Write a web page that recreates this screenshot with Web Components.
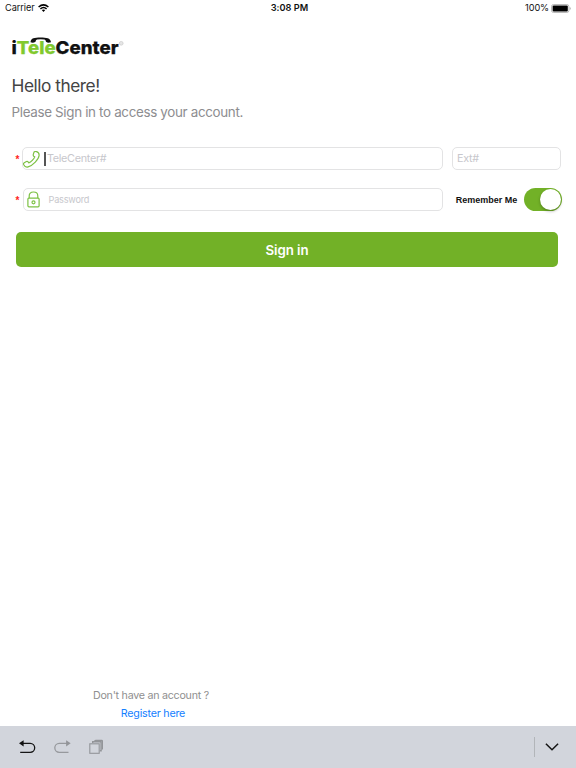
<!DOCTYPE html>
<html lang="en">
<head>
<meta charset="utf-8">
<title>iTeleCenter</title>
<style>
html,body{margin:0;height:100%;background:#fff}
body{font-family:Inter,"Liberation Sans",sans-serif;overflow:hidden}
</style>
</head>
<body>
<sign-in-screen></sign-in-screen>
<script>
const define = (name, html) => customElements.define(name, class extends HTMLElement {
  constructor() {
    super();
    const t = document.createElement('template');
    t.innerHTML = html;
    this.attachShadow({mode: 'open'}).append(t.content.cloneNode(true));
  }
});

define('status-bar', `
<style>
:host{display:grid;grid-template-columns:1fr auto 1fr;height:16px;align-items:center;padding:0 5px;box-sizing:border-box;font-size:9.2px;line-height:16px;color:#111}
.left,.right{display:flex;align-items:center}
.left{gap:3px;letter-spacing:-.08px}
.right{justify-content:flex-end;gap:2px;letter-spacing:-.1px}
.time{font-weight:600;padding-left:3px;letter-spacing:.02px}
svg{display:block}
</style>
<div class="left"><span>Carrier</span>
<svg width="11" height="8" viewBox="0 0 11 8"><g fill="none" stroke="#000" stroke-width="1.5"><path d="M.6 3Q5.5-1.3 10.4 3"/><path d="M2.4 4.9Q5.5 2.2 8.6 4.9"/></g><path d="M3.8 6.1Q5.5 4.8 7.2 6.1L5.5 7.9z"/></svg></div>
<span class="time">3:08 PM</span>
<div class="right"><span>100%</span>
<svg width="20" height="9" viewBox="0 0 20 9"><rect x=".5" y=".5" width="17.4" height="8" rx="2" fill="#fff" stroke="#aaa" stroke-width=".8"/><rect x="1.6" y="1.6" width="15.2" height="5.8" rx="1"/><path d="M18.7 3v3q1-.4 1-1.5t-1-1.5" fill="#aaa"/></svg></div>`);

define('brand-logo', `
<style>
:host{display:block;height:24px}
svg{display:block;font:800 18px Inter,"Liberation Sans",sans-serif}
</style>
<svg width="114" height="24" viewBox="0 0 114 24">
<text x="-.5" y="20.1" textLength="107" lengthAdjust="spacingAndGlyphs" fill="#111" stroke="#111" stroke-width=".25">i<tspan fill="#81c92e" stroke="#81c92e">Tele</tspan>Center</text>
<path d="M18.5 8.2C18.8 4 22.5 3.5 28.5 3.5S38.4 4 39 8.2Q36 9.3 34 7.8Q33.8 5.9 32.5 5.5Q28.5 4.9 25 5.5Q23.7 5.9 23.5 7.8Q21 9.3 18.5 8.2Z" fill="#111"/>
<circle cx="109.2" cy="9.3" r="1.9" fill="#e6e6e6" stroke="#ccc" stroke-width=".7"/>
</svg>`);

define('text-field', `
<style>
:host{display:flex;align-items:center;box-sizing:border-box;height:23px;border:1px solid #e3e3e4;border-radius:5px;background:#fff;color:#c7c7cc;font-size:10.8px;letter-spacing:-.3px;min-width:0}
</style><slot></slot>`);

define('required-mark', `
<style>:host{display:block;width:7.5px;text-align:left;color:#f22;font:700 10px/13px "Liberation Sans",sans-serif;padding:3px 0 0 .5px;box-sizing:border-box;height:18px}</style>*`);

define('phone-icon', `
<style>:host{display:block}svg{display:block}</style>
<svg width="17" height="17" viewBox="0 0 17 17"><path d="M11.1.9Q12.2.2 13.5.6Q16.3 1.4 16.1 4.5C15.8 8.3 9.9 14.6 5.1 15.9Q2.1 16.7.6 13.5Q.2 12.4 1.3 11.7L3.4 10.5Q4.4 10 5.1 10.9L5.8 11.9C7.8 11.2 11.1 7.7 11.8 5.9L10.8 5.2Q10 4.5 10.3 3.4Z" fill="none" stroke="#7dc144" stroke-width="1.2"/></svg>`);

define('lock-icon', `
<style>:host{display:block}svg{display:block}</style>
<svg width="13" height="17" viewBox="0 0 13 17"><g fill="none" stroke="#7dc144" stroke-width="1.2"><rect x=".9" y="7.1" width="11.2" height="8.7" rx="1"/><path d="M2.2 7V4.9Q2.2 1 6.5 1T10.8 4.9V7"/><circle cx="6.5" cy="11.3" r="1.5"/></g></svg>`);

define('toggle-switch', `
<style>
:host{display:flex;justify-content:flex-end;box-sizing:border-box;width:38px;height:23px;border-radius:12px;background:#72b127;padding:1px 1px}
i{width:21px;height:21px;border-radius:50%;background:#fff;box-shadow:0 1.5px 3px #0004}
</style><i></i>`);

define('primary-button', `
<style>:host{display:flex;align-items:center;justify-content:center;height:35px;border-radius:5px;background:#72b127;color:#fff;font-size:13.3px;font-weight:600;letter-spacing:-.05px}</style><slot></slot>`);

define('sign-up-prompt', `
<style>
:host{display:flex;flex-direction:column;align-items:center;font-size:10.7px;line-height:18px;color:#8f8f8f;letter-spacing:-.26px}
a{color:#1480ff;letter-spacing:-.2px;padding-left:4px}
</style><span>Don't have an account ?</span><a>Register here</a>`);

define('keyboard-toolbar', `
<style>
:host{display:flex;align-items:center;justify-content:space-between;height:42px;background:#d2d5dc;padding:0 17px 0 19px;box-sizing:border-box}
div{display:flex;align-items:center}
svg{display:block}
.a{gap:18px}.b{gap:10px}
b{width:1px;height:20px;background:#b2b5b9}
</style>
<div class="a">
<svg width="17" height="16" viewBox="0 0 17 16"><path d="M2 4.3H11.2A4.5 4.5 0 0 1 11.2 13.3H1.2" fill="none" stroke="#151515" stroke-width="1.3"/><path d="M0 4.3L4.6 1.2V7.4z" fill="#111"/></svg>
<svg width="17" height="16" viewBox="0 0 17 16"><path d="M14 4.3H5.3A4.5 4.5 0 0 0 5.3 13.3H14.5" fill="none" stroke="#97999d" stroke-width="1.3"/><path d="M16.7 4.3L12.1 1.2V7.4z" fill="#939599"/></svg>
<svg width="15" height="16" viewBox="0 0 15 16"><rect x=".8" y="4.8" width="9.4" height="9.5" fill="none" stroke="#939599" stroke-width="1.1"/><path d="M3.7 4V2.8H12.1V11.8H10.8" fill="none" stroke="#939599" stroke-width="1.4"/><path d="M5 2Q5.6.8 7 .8H12.8Q14 .8 14 2V10.5H12.8V2z" fill="#939599"/></svg>
</div>
<div class="b"><b></b><svg width="14" height="10" viewBox="0 0 14 10"><path d="M.9 1.7L7 7.7L13.1 1.7" fill="none" stroke="#151515" stroke-width="1.5"/></svg></div>`);

define('sign-in-screen', `
<style>
:host{display:flex;flex-direction:column;height:768px;width:576px;background:#fff}
main{flex:1;display:flex;flex-direction:column}
brand-logo{margin:18px 0 0 12px}
h1,p{margin:0 0 0 11.5px;font-weight:400}
h1{margin-top:16px;font-size:17.3px;line-height:24px;color:#444;letter-spacing:-.46px}
p{margin-top:4px;font-size:13.4px;line-height:20px;color:#8d8d90;letter-spacing:-.33px}
.row{display:flex;align-items:center}
.one{margin:25px 15px 0 15px}
.two{margin:18px 14px 0 15px}
.main{width:420.5px;flex:none}
.one phone-icon{margin:1px 0 0 -.5px}
.ext{width:109.5px;margin-left:9px;padding-left:4px}
.caret{width:2px;height:14px;background:#555;margin:0 .5px 0 4.5px}
lock-icon{margin:0 9px 0 3px}
.pw{font-size:9.2px;letter-spacing:-.22px;margin-top:-1px}
.remember{font:700 9px "Liberation Sans",sans-serif;color:#111;margin-left:12.8px;white-space:nowrap}
toggle-switch{margin-left:auto}
primary-button{margin:21px 18px 0 16px}
sign-up-prompt{margin:auto auto 3px 93px}
</style>
<status-bar></status-bar>
<main>
<brand-logo></brand-logo>
<h1>Hello there!</h1>
<p>Please Sign in to access your account.</p>
<div class="row one"><required-mark></required-mark><text-field class="main"><phone-icon></phone-icon><i class="caret"></i><span>TeleCenter#</span></text-field><text-field class="ext">Ext#</text-field></div>
<div class="row two"><required-mark></required-mark><text-field class="main"><lock-icon></lock-icon><span class="pw">Password</span></text-field><span class="remember">Remember Me</span><toggle-switch></toggle-switch></div>
<primary-button>Sign in</primary-button>
<sign-up-prompt></sign-up-prompt>
</main>
<keyboard-toolbar></keyboard-toolbar>`);
</script>
</body>
</html>
